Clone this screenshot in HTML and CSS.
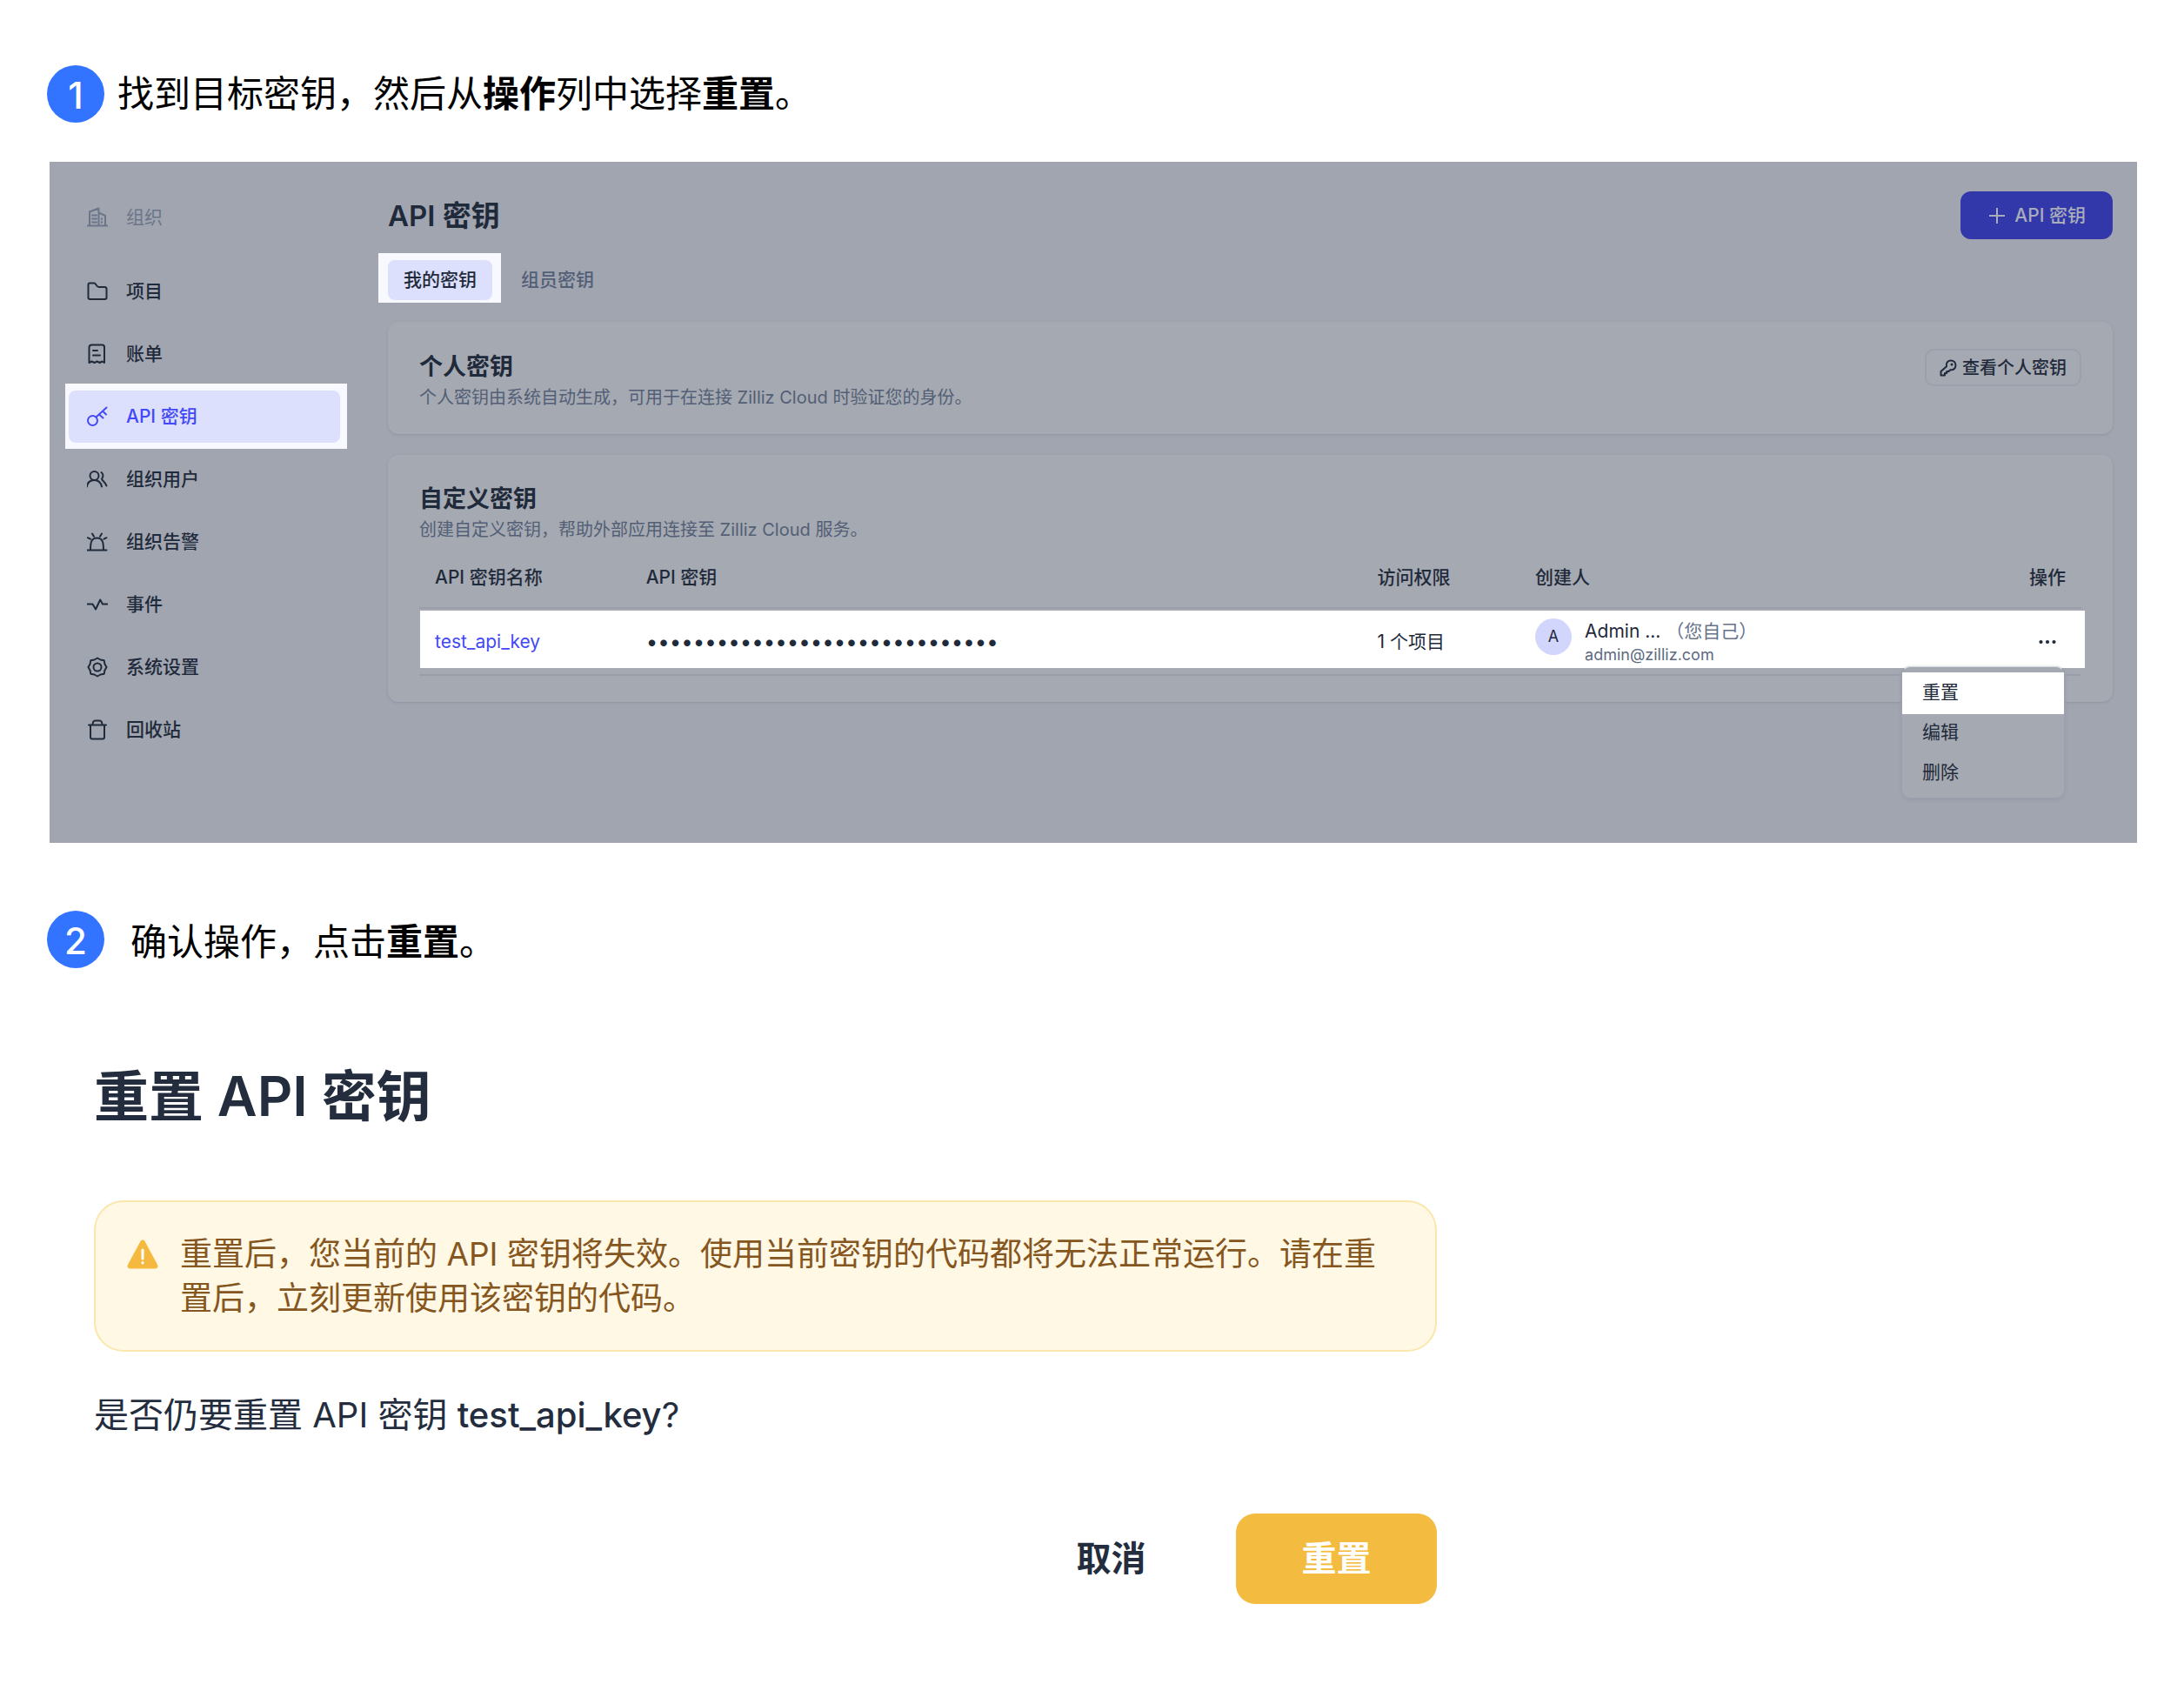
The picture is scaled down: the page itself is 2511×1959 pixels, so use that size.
FILE: index.html
```html
<!DOCTYPE html>
<html lang="zh-CN">
<head>
<meta charset="utf-8">
<meta name="viewport" content="width=device-width, initial-scale=1">
<title>重置 API 密钥</title>
<link rel="stylesheet" href="styles.css">
</head>
<body>
<main class="guide">
  <div class="step step-first">
    <span class="step-number">1</span>
    <p class="step-text">找到目标密钥，然后从<b>操作</b>列中选择<b>重置</b>。</p>
  </div>

  <div class="console">
    <nav class="sidebar" aria-label="组织">
      <div class="nav-item nav-heading">
        <svg class="icon" viewBox="0 0 24 24"><path d="M0 21.500h24M3 21.500V5.500L13.500 1.500v20M13.500 6.500l7.500 3.500v11.500M6 9.500h5M6 13.500h5M6 17.500h5M17 13.200v.8M17 17v.8"/></svg>
        组织
      </div>
      <ul class="nav-list">
        <li><a class="nav-item" href="#">
          <svg class="icon" viewBox="0 0 24 24"><path d="M3 2.500h5.500c1.500 0 2.500 4.500 5 4.500H20c1.500 0 2.500.7 2.500 2v10c0 1.400-.8 2-2 2h-17c-1.300 0-2-.8-2-2V4.500c0-1.200.5-2 1.500-2z"/></svg>
          项目</a></li>
        <li><a class="nav-item" href="#">
          <svg class="icon" viewBox="0 0 24 24"><path d="M2.500 22V4.500C2.500 2.500 3.500 1.500 5.500 1.500h12c1.500 0 2.500 1 2.500 2.500v18l-2.500-1.500-2.800 1.500-3-1.500L8.500 22l-3-1.500zM7 8h5M7 13.500h8"/></svg>
          账单</a></li>
        <li class="spotlight spotlight-nav"><a class="nav-item active" href="#">
          <svg class="icon" viewBox="0 0 24 24"><circle cx="6.500" cy="16.500" r="5.500"/><path d="M10.500 12.500L22.500 1.500M14 9.500l4.500 4M18 5.500l4 4"/></svg>
          API 密钥</a></li>
        <li><a class="nav-item" href="#">
          <svg class="icon" viewBox="0 0 24 24"><circle cx="8.500" cy="8" r="5"/><path d="M0 20.500c.5-4.500 3.500-7.500 8.500-7.500s7.500 3 8.500 7.500M16.500 4c2.500 2 2.500 5 .5 7.500 0 2 4 3 5.500 8"/></svg>
          组织用户</a></li>
        <li><a class="nav-item" href="#">
          <svg class="icon" viewBox="0 0 24 24"><path d="M.5 21.500h22M4 21.500c0-8 .5-14 7.500-14S19 13.500 19 21.500M6 2.500l2 3.200M17 2.500l-2 3.200M.8 7.200l3 1.500M22.500 7.200l-3 1.500"/></svg>
          组织告警</a></li>
        <li><a class="nav-item" href="#">
          <svg class="icon" viewBox="0 0 24 24"><path d="M.5 11.500h6l3.500 6L15.200 6.500l2.800 5h5.500"/></svg>
          事件</a></li>
        <li><a class="nav-item" href="#">
          <svg class="icon" viewBox="0 0 24 24"><circle cx="12" cy="12" r="4.500"/><path d="M12 1.500l3.500 2 4.200.8.700 4L22.500 12l-2.100 3.700-.7 4-4.200.8-3.500 2-3.500-2-4.200-.8-.7-4L1.500 12l2.100-3.700.7-4 4.200-.8z"/></svg>
          系统设置</a></li>
        <li><a class="nav-item" href="#">
          <svg class="icon" viewBox="0 0 24 24"><path d="M2 6.500h20M4 6.500v14c0 1.300.7 2 2 2h12c1.300 0 2-.7 2-2v-14M6.500 6.500c0-3 1-5 3-5h5c2 0 3 2 3 5"/></svg>
          回收站</a></li>
      </ul>
    </nav>

    <div class="content">
      <header class="content-header">
        <h1 class="content-title">API 密钥</h1>
        <button class="primary-button" type="button">
          <svg class="plus" viewBox="0 0 18 18"><path d="M9 .5v17M.5 9h17"/></svg>
          API 密钥
        </button>
      </header>

      <div class="tabs" role="tablist">
        <div class="spotlight spotlight-tab"><button class="tab selected" type="button" role="tab" aria-selected="true">我的密钥</button></div>
        <button class="tab" type="button" role="tab" aria-selected="false">组员密钥</button>
      </div>

      <section class="card card-row">
        <div>
          <h2 class="card-title">个人密钥</h2>
          <p class="card-note">个人密钥由系统自动生成，可用于在连接 Zilliz Cloud 时验证您的身份。</p>
        </div>
        <button class="outline-button" type="button">
          <svg class="small-key" viewBox="0 0 20 20"><path d="M1.500 18.500v-4.500L8 8.200C7 4 9.500 1.500 13 1.500c3.200 0 5.500 2.300 5.500 5.500 0 3.500-2.800 5.800-6.200 5.200L10.500 14H8.200v2H6v2.500z"/><circle class="key-dot" cx="14" cy="6" r="1.500"/></svg>
          查看个人密钥
        </button>
      </section>

      <section class="card">
        <h2 class="card-title">自定义密钥</h2>
        <p class="card-note">创建自定义密钥，帮助外部应用连接至 Zilliz Cloud 服务。</p>
        <table class="keys">
          <thead>
            <tr>
              <th class="col-name" scope="col">API 密钥名称</th>
              <th class="col-key" scope="col">API 密钥</th>
              <th class="col-access" scope="col">访问权限</th>
              <th scope="col">创建人</th>
              <th class="col-action" scope="col">操作</th>
            </tr>
          </thead>
          <tbody>
            <tr class="key-row">
              <td class="key-cell"><a class="key-link" href="#">test_api_key</a></td>
              <td class="secret">••••••••••••••••••••••••••••••</td>
              <td>1 个项目</td>
              <td>
                <div class="creator">
                  <span class="avatar">A</span>
                  <div>
                    <div class="creator-name">Admin ... <span class="creator-self">（您自己）</span></div>
                    <div class="creator-mail">admin@zilliz.com</div>
                  </div>
                </div>
              </td>
              <td class="action-cell">
                <button class="more" type="button" aria-label="操作">
                  <svg class="more-dots" viewBox="0 0 20 6"><circle cx="2.500" cy="3" r="2.100"/><circle cx="10" cy="3" r="2.100"/><circle cx="17.500" cy="3" r="2.100"/></svg>
                </button>
                <div class="menu" role="menu">
                  <button class="menu-item picked" type="button" role="menuitem">重置</button>
                  <button class="menu-item" type="button" role="menuitem">编辑</button>
                  <button class="menu-item" type="button" role="menuitem">删除</button>
                </div>
              </td>
            </tr>
          </tbody>
        </table>
      </section>
    </div>
  </div>

  <div class="step step-second">
    <span class="step-number">2</span>
    <p class="step-text">确认操作，点击<b>重置</b>。</p>
  </div>

  <section class="dialog" role="dialog" aria-labelledby="dialog-title">
    <h2 class="dialog-title" id="dialog-title">重置 API 密钥</h2>
    <div class="alert">
      <svg class="alert-icon" viewBox="0 0 36 34"><path class="alert-shape" d="M15.500 2c1.200-2 3.800-2 5 0l14.600 27c1 2-.2 4.500-2.600 4.500h-29C1.100 33.500-.1 31 .9 29z"/><path class="alert-mark" d="M18 12v10M18 26.500v.5"/></svg>
      <p class="alert-text">重置后，您当前的 API 密钥将失效。使用当前密钥的代码都将无法正常运行。请在重置后，立刻更新使用该密钥的代码。</p>
    </div>
    <p class="question">是否仍要重置 API 密钥 <strong class="question-key">test_api_key</strong>?</p>
    <div class="dialog-actions">
      <button class="dialog-button" type="button">取消</button>
      <button class="dialog-button confirm" type="button">重置</button>
    </div>
  </section>
</main>
</body>
</html>
```

FILE: styles.css
```css
* {
  box-sizing: border-box;
}

body {
  margin: 0;
  background: #fff;
  color: #1f2a3b;
  font-family: Inter, "Noto Sans CJK SC", sans-serif;
  font-size: 21px;
  line-height: 30px;
}

h1, h2, p, ul {
  margin: 0;
  padding: 0;
}

button {
  margin: 0;
  padding: 0;
  border: 0;
  background: none;
  color: inherit;
  font: inherit;
  cursor: pointer;
}

a {
  color: inherit;
  text-decoration: none;
}

svg {
  display: block;
  flex: none;
  fill: none;
  stroke: currentColor;
  stroke-width: 2;
  stroke-linecap: round;
  stroke-linejoin: round;
}

.guide {
  padding: 75px 54px 115px;
}

/* Numbered steps */
.step {
  display: flex;
  align-items: center;
}

.step-first {
  align-items: flex-start;
  gap: 15px;
}

.step-second {
  gap: 30px;
  margin-top: 78px;
}

.step-number {
  display: flex;
  align-items: center;
  justify-content: center;
  width: 66px;
  height: 66px;
  padding-top: 4px;
  border-radius: 50%;
  background: #3273ff;
  color: #fff;
  font-size: 42px;
  font-weight: 500;
}

.step-text {
  color: #000;
  font-family: "Noto Sans CJK SC", sans-serif;
  font-size: 42px;
  line-height: 60px;
}

/* Dimmed console */
.console {
  display: flex;
  gap: 55px;
  margin: 45px 0 0 3px;
  padding: 34px 28px 100px 22px;
  background: #a1a5b0;
}

.sidebar {
  flex: none;
  width: 312px;
}

.nav-list {
  display: flex;
  flex-direction: column;
  gap: 12px;
  margin-top: 25px;
  list-style: none;
}

.nav-item {
  display: flex;
  align-items: center;
  gap: 21px;
  height: 60px;
  padding-left: 21px;
  border-radius: 8px;
  font-weight: 500;
}

.nav-heading {
  color: #6c7688;
  font-weight: 400;
}

.icon {
  width: 24px;
  height: 24px;
}

.active {
  background: #dce0fd;
  color: #4349f5;
}

.spotlight {
  background: #f8f9ff;
}

.spotlight-nav {
  margin: -8px -8px -7px -4px;
  padding: 8px 8px 7px 4px;
}

.content {
  flex: 1;
  min-width: 0;
}

.content-header {
  display: flex;
  align-items: center;
  justify-content: space-between;
}

.content-title {
  font-size: 33px;
  font-weight: 600;
  line-height: 48px;
}

.primary-button {
  display: flex;
  align-items: center;
  gap: 11px;
  height: 55px;
  padding: 0 31px 0 33px;
  border-radius: 12px;
  background: #3238aa;
  color: #a9adb9;
  font-weight: 500;
}

.plus {
  width: 18px;
  height: 18px;
}

.tabs {
  display: flex;
  align-items: baseline;
  gap: 5px;
  margin: 16px 0 22px -11px;
}

.spotlight-tab {
  padding: 8px 10px 3px 11px;
}

.tab {
  height: 46px;
  padding: 0 18px;
  border-radius: 8px;
  color: #525f76;
  font-weight: 500;
}

.selected {
  display: block;
  background: #dce0fd;
  color: #1f2a3b;
}

.card {
  padding: 30px 36px;
  border-radius: 12px;
  background: #a5a9b1;
  box-shadow: 0 1px 3px #8f94a2;
}

.card + .card {
  margin-top: 24px;
}

.card-row {
  display: flex;
  align-items: flex-start;
  justify-content: space-between;
  padding-top: 31px;
  padding-bottom: 28px;
}

.card-title {
  font-size: 27px;
  font-weight: 600;
  line-height: 42px;
}

.card-note {
  color: #525f76;
  font-size: 20px;
  line-height: 28px;
}

.outline-button {
  display: flex;
  align-items: center;
  gap: 6px;
  height: 43px;
  padding: 0 15px;
  border: 2px solid #9ca0ac;
  border-radius: 10px;
  font-size: 20px;
  font-weight: 500;
}

.small-key {
  width: 20px;
  height: 20px;
}

.key-dot,
.more-dots {
  fill: currentColor;
  stroke: none;
}

/* Key table */
.keys {
  position: relative;
  z-index: 0;
  width: 100%;
  margin-top: 7px;
  border-collapse: separate;
  border-spacing: 0;
  table-layout: fixed;
}

.keys th,
.keys td {
  padding: 0 18px;
  border-bottom: 2px solid #9a9eab;
  text-align: left;
}

.keys th {
  height: 70px;
  font-weight: 500;
}

.keys td {
  height: 77px;
}

.col-name {
  width: 12.7%;
}

.col-key {
  width: 44%;
}

.col-access {
  width: 9.5%;
}

.keys .col-action {
  text-align: right;
}

.key-row {
  position: relative;
}

.key-cell::before {
  content: "";
  position: absolute;
  inset: 2px -4px 9px 1px;
  z-index: -1;
  background: #fff;
}

.key-link {
  color: #4349f5;
}

.keys .secret {
  font-size: 24px;
}

.creator {
  display: flex;
  gap: 15px;
}

.avatar {
  display: flex;
  align-items: center;
  justify-content: center;
  flex: none;
  width: 42px;
  height: 42px;
  border-radius: 50%;
  background: #d2d6fc;
  font-size: 18px;
}

.creator-name {
  white-space: nowrap;
}

.creator-self {
  color: #66738a;
}

.creator-mail {
  color: #5d6a82;
  font-size: 18px;
  line-height: 24px;
}

.action-cell {
  position: relative;
}

.more {
  display: block;
  margin-left: auto;
  padding: 11px;
}

.more-dots {
  width: 20px;
  height: 6px;
}

.menu {
  position: absolute;
  top: 66px;
  right: 19px;
  display: flex;
  flex-direction: column;
  width: 188px;
  padding: 6px 0;
  border: 1px solid #9ca0ac;
  border-top: 1px solid #d5d9e2;
  border-radius: 10px;
  background: #a5a9b1;
  box-shadow: 0 2px 4px #979ba8;
}

.menu-item {
  height: 46px;
  padding-left: 23px;
  text-align: left;
}

.picked {
  background: #fff;
  box-shadow: 0 2px #fff;
}

/* Confirmation dialog */
.dialog {
  max-width: 1544px;
  margin: 107px 0 0 54px;
  color: #232d3e;
}

.dialog-title {
  font-size: 63px;
  font-weight: 600;
  line-height: 80px;
}

.alert {
  display: flex;
  gap: 25px;
  margin-top: 80px;
  padding: 34px 36px;
  border: 2px solid #fbe7ac;
  border-radius: 34px;
  background: #fff8e4;
  color: #86561f;
}

.alert-icon {
  width: 36px;
  height: 34px;
  margin-top: 9px;
}

.alert-shape {
  fill: #f5b93f;
  stroke: none;
}

.alert-mark {
  stroke: #fff;
  stroke-width: 3;
}

.alert-text {
  font-size: 37px;
  line-height: 51px;
}

.question {
  margin-top: 43px;
  font-size: 40px;
  line-height: 60px;
}

.question-key {
  font-weight: 500;
}

.dialog-actions {
  display: flex;
  justify-content: flex-end;
  gap: 28px;
  margin-top: 83px;
}

.dialog-button {
  width: 231px;
  height: 104px;
  border-radius: 22px;
  font-size: 40px;
  font-weight: 600;
}

.confirm {
  background: #f4bb41;
  color: #fff;
}
```
